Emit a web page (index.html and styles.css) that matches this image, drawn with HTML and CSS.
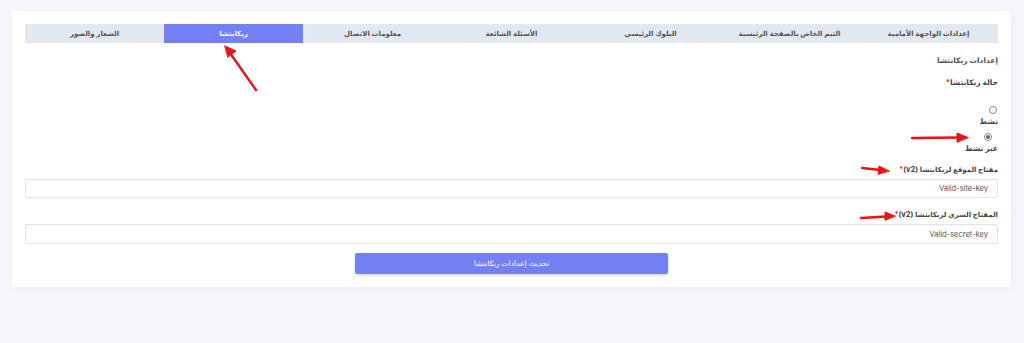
FILE: index.html
```html
<!DOCTYPE html>
<html lang="ar" dir="rtl">
<head>
<meta charset="utf-8">
<title>إعدادات ريكابتشا</title>
<link rel="stylesheet" href="styles.css">
</head>
<body>
<div class="page">
  <div class="card">
    <nav class="tabs">
      <div class="tab">إعدادات الواجهة الأمامية</div>
      <div class="tab">الثيم الخاص بالصفحة الرئيسية</div>
      <div class="tab">البلوك الرئيسي</div>
      <div class="tab">الأسئلة الشائعة</div>
      <div class="tab">معلومات الاتصال</div>
      <div class="tab active">ريكابتشا</div>
      <div class="tab">الشعار والصور</div>
    </nav>
    <form class="form">
      <div class="section-title">إعدادات ريكابتشا</div>
      <div class="label status-label">حالة ريكابتشا<span class="req">*</span></div>
      <div class="radio-row"><span class="radio"></span></div>
      <div class="radio-text">نشط</div>
      <div class="radio-row second"><span class="radio checked"></span></div>
      <div class="radio-text">غير نشط</div>
      <div class="label key-label">مفتاح الموقع لريكابتشا <span class="latin">(v2)</span><span class="req">*</span></div>
      <div class="input first"><span class="value">Valid-site-key</span></div>
      <div class="label key-label second">المفتاح السري لريكابتشا <span class="latin">(v2)</span><span class="req">*</span></div>
      <div class="input"><span class="value">Valid-secret-key</span></div>
      <div class="actions"><button type="button" class="btn">تحديث إعدادات ريكابتشا</button></div>
    </form>
  </div>
</div>
<svg class="annotations" width="1024" height="343" viewBox="0 0 1024 343" xmlns="http://www.w3.org/2000/svg">
  <g stroke="#ee1111" stroke-width="2.4" stroke-linecap="round" fill="#ee1111">
    <line x1="256" y1="90" x2="230" y2="53"/>
    <polygon points="225,46 236,51 228,57" stroke-width="1"/>
    <line x1="912" y1="138" x2="958" y2="137.5"/>
    <polygon points="968,137.5 957,133 957,142" stroke-width="1"/>
    <line x1="862" y1="168" x2="880" y2="170"/>
    <polygon points="889,171 879,166 878,174" stroke-width="1"/>
    <line x1="861" y1="218" x2="886" y2="216.5"/>
    <polygon points="895,216 885,212 885,220" stroke-width="1"/>
  </g>
</svg>
</body>
</html>
```

FILE: styles.css
```css
* { box-sizing: border-box; }
html, body { margin: 0; padding: 0; }
body {
  background: #f6f7fb;
  font-family: Inter, "DejaVu Sans", sans-serif;
  color: #444;
  width: 1024px;
  height: 343px;
  position: relative;
  overflow: hidden;
}
.page {
  padding: 11px 13px 0 12px;
}
.card {
  background: #fff;
  padding: 13px;
  box-shadow: 0 2px 8px rgba(60, 70, 120, 0.07);
}
.tabs {
  display: grid;
  grid-template-columns: repeat(7, 1fr);
  height: 19px;
  background: #e2e8f0;
}
.tab {
  display: flex;
  align-items: center;
  justify-content: center;
  font-size: 7px;
  font-weight: 600;
  color: #555;
  white-space: nowrap;
}
.tab.active {
  background: #7480f5;
  color: #fff;
}
.form {
  display: flex;
  flex-direction: column;
  margin: 0;
}
.section-title {
  margin-top: 11px;
  line-height: 14px;
  font-size: 7.5px;
  font-weight: 600;
  color: #555;
}
.label {
  line-height: 14px;
  font-size: 7px;
  font-weight: 700;
  color: #444;
}
.latin { font-size: 7.5px; }
.status-label { margin-top: 8px; font-size: 7.5px; }
.req { color: #e22; }
.radio-row {
  margin-top: 14px;
  height: 12px;
  display: flex;
  align-items: center;
  padding-right: 1px;
}
.radio-row.second {
  margin-top: 3px;
  padding-right: 6px;
}
.radio {
  width: 8px;
  height: 8px;
  border: 1px solid #888;
  border-radius: 50%;
  background: #fff;
  display: flex;
  align-items: center;
  justify-content: center;
}
.radio.checked::after {
  content: "";
  width: 4px;
  height: 4px;
  border-radius: 50%;
  background: #666;
}
.radio-text {
  line-height: 12px;
  font-size: 7.5px;
  font-weight: 700;
  color: #444;
}
.key-label { margin-top: 8px; }
.key-label.second { margin-top: 10px; }
.input {
  margin-top: 2px;
  height: 20px;
  border: 1px solid #e3e3e3;
  border-radius: 2px;
  box-shadow: inset 0 1px 1px rgba(0,0,0,0.03);
  display: flex;
  align-items: center;
  padding: 0 9px;
}
.input.first { height: 19px; }
.value {
  font-size: 7.5px;
  color: #555;
  direction: ltr;
}
.actions {
  display: flex;
  justify-content: center;
  margin-top: 9px;
}
.btn {
  width: 313px;
  height: 21px;
  border: 0;
  border-radius: 2px;
  background: #7480f5;
  color: #fff;
  font-family: inherit;
  font-size: 7.5px;
  box-shadow: 0 1px 3px rgba(116, 128, 245, 0.35);
}
.annotations {
  position: absolute;
  top: 0;
  left: 0;
  pointer-events: none;
}
```
